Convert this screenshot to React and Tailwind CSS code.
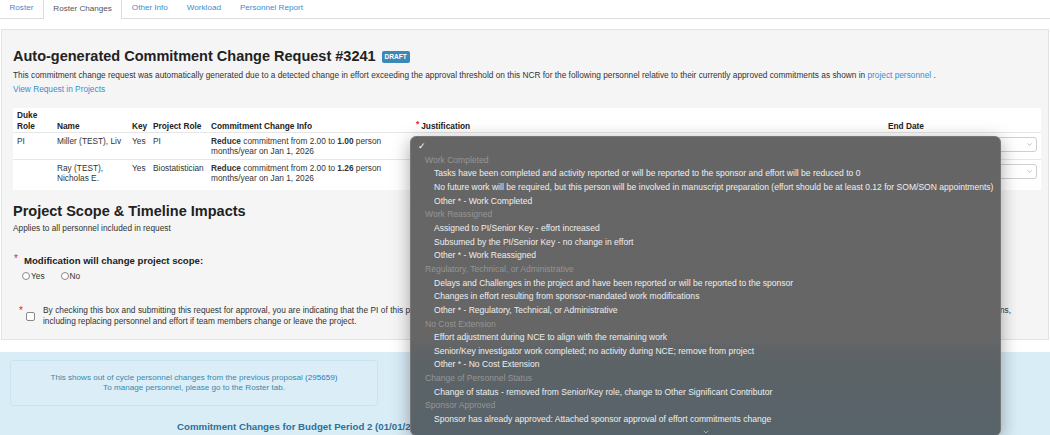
import React from 'react'
import { ChevronDown } from 'lucide-react'

const tabs = ['Roster', 'Roster Changes', 'Other Info', 'Workload', 'Personnel Report']

const personnel = [
    { id: 1, dukeRole: 'PI', name: 'Miller (TEST), Liv', key: 'Yes', role: 'PI', to: '1.00', h: 'h-[27px]' },
    { id: 2, dukeRole: '', name: 'Ray (TEST), Nicholas E.', key: 'Yes', role: 'Biostatistician', to: '1.26', h: 'h-[30px]' },
]

const justificationGroups = [
    {
        label: 'Work Completed',
        options: [
            'Tasks have been completed and activity reported or will be reported to the sponsor and effort will be reduced to 0',
            'No future work will be required, but this person will be involved in manuscript preparation (effort should be at least 0.12 for SOM/SON appointments)',
            'Other * - Work Completed',
        ],
    },
    {
        label: 'Work Reassigned',
        options: [
            'Assigned to PI/Senior Key - effort increased',
            'Subsumed by the PI/Senior Key - no change in effort',
            'Other * - Work Reassigned',
        ],
    },
    {
        label: 'Regulatory, Technical, or Administrative',
        options: [
            'Delays and Challenges in the project and have been reported or will be reported to the sponsor',
            'Changes in effort resulting from sponsor-mandated work modifications',
            'Other * - Regulatory, Technical, or Administrative',
        ],
    },
    {
        label: 'No Cost Extension',
        options: [
            'Effort adjustment during NCE to align with the remaining work',
            'Senior/Key investigator work completed; no activity during NCE; remove from project',
            'Other * - No Cost Extension',
        ],
    },
    {
        label: 'Change of Personnel Status',
        options: ['Change of status - removed from Senior/Key role, change to Other Significant Contributor'],
    },
    {
        label: 'Sponsor Approved',
        options: ['Sponsor has already approved: Attached sponsor approval of effort commitments change'],
    },
]

const SelectBox = () => (
    <div className="flex h-[15px] items-center justify-end rounded-[3px] border border-[#cfcfcf] bg-white pr-[3px]">
        <ChevronDown size={7} strokeWidth={1.6} className="text-[#777]" />
    </div>
)

const JustificationMenu = () => (
    <div className="absolute left-[410px] top-[136px] h-[300px] w-[591px] overflow-hidden rounded-[6px] border border-[#777] bg-[linear-gradient(to_bottom,#666565_0%,#666666_67%,#5d6367_74%,#57636a_100%)] pt-[3.2px] text-[8.55px] text-[#eeeeee] shadow-[0_4px_18px_rgba(0,0,0,0.35)]">
        <div className="h-[13.65px] pl-[7px] leading-[13.65px] text-white">✓</div>
        {justificationGroups.map((group) => (
            <div key={group.label}>
                <div className="h-[13.65px] pl-[14px] leading-[13.65px] text-[#959595]">{group.label}</div>
                {group.options.map((opt) => (
                    <div key={opt} className="h-[13.65px] whitespace-nowrap pl-[23px] leading-[13.65px]">
                        {opt}
                    </div>
                ))}
            </div>
        ))}
        <div className="flex justify-center pt-[1px]">
            <ChevronDown size={8} strokeWidth={1.8} className="text-[#ddd]" />
        </div>
    </div>
)

export default function App() {
    return (
        <div className="relative h-[435px] w-[1050px] overflow-hidden bg-white font-['Liberation_Sans',Arial,sans-serif] text-[8.3px] text-[#333]">
            {/* tabs */}
            <div className="flex h-[19px] items-end border-b border-[#ddd]">
                {tabs.map((tab) =>
                    tab === 'Roster Changes' ? (
                        <div key={tab} className="-mb-px flex h-[20px] items-center border-x border-[#ddd] bg-white px-[9.5px] text-[8.1px] text-[#555]">
                            {tab}
                        </div>
                    ) : (
                        <div key={tab} className="flex h-[19px] items-center px-[9.5px] text-[8.1px] text-[#3a8dd0]">
                            {tab}
                        </div>
                    )
                )}
            </div>

            {/* commitment change request panel */}
            <div className="mx-[1px] mt-[10px] h-[311px] border border-[#e3e3e3] bg-[#f5f5f5] pl-[11px] pt-[17px]">
                <div className="flex items-center gap-[6px]">
                    <h1 className="text-[14.5px] font-bold leading-[18px] text-[#222]">Auto-generated Commitment Change Request #3241</h1>
                    <span className="mt-[1px] rounded-[2px] bg-[#3d88b9] px-[3px] text-[6.5px] font-bold leading-[12px] text-white">DRAFT</span>
                </div>
                <p className="mt-[5px] leading-[11px]">
                    This commitment change request was automatically generated due to a detected change in effort exceeding the approval threshold on this NCR for the following personnel relative to their currently approved commitments as shown in{' '}
                    <span className="text-[#3a8dd0]">project personnel</span> .
                </p>
                <p className="mt-[3px] leading-[11px] text-[#3a8dd0]">View Request in Projects</p>

                <table className="mt-[12.5px] w-[1028px] table-fixed border-collapse bg-white">
                    <colgroup>
                        <col className="w-[40px]" />
                        <col className="w-[75px]" />
                        <col className="w-[21px]" />
                        <col className="w-[58px]" />
                        <col className="w-[205px]" />
                        <col className="w-[472px]" />
                        <col className="w-[157px]" />
                    </colgroup>
                    <thead>
                        <tr className="h-[25px] border-b border-[#e6e6e6] text-left font-bold leading-[11px] text-[#222]">
                            <th className="px-[4px] pb-[0.5px] align-bottom">Duke<br />Role</th>
                            <th className="px-[4px] pb-[0.5px] align-bottom">Name</th>
                            <th className="whitespace-nowrap px-[4px] pb-[0.5px] align-bottom">Key</th>
                            <th className="whitespace-nowrap px-[4px] pb-[0.5px] align-bottom">Project Role</th>
                            <th className="whitespace-nowrap px-[4px] pb-[0.5px] align-bottom">Commitment Change Info</th>
                            <th className="px-[4px] pb-[0.5px] align-bottom">
                                <span className="relative -top-[2px] mr-[2px] text-[#e0261f]">*</span>Justification
                            </th>
                            <th className="px-[4px] pb-[0.5px] align-bottom">End Date</th>
                        </tr>
                    </thead>
                    <tbody>
                        {personnel.map((p, i) => (
                            <tr key={p.id} className={`${p.h} ${i === 0 ? 'border-b border-[#e6e6e6]' : ''} leading-[10px]`}>
                                <td className="px-[4px] pt-[3px] align-top">{p.dukeRole}</td>
                                <td className="px-[4px] pt-[3px] align-top">{p.name}</td>
                                <td className="px-[4px] pt-[3px] align-top">{p.key}</td>
                                <td className="whitespace-nowrap px-[4px] pt-[3px] align-top">{p.role}</td>
                                <td className="px-[4px] pt-[3px] align-top">
                                    <b>Reduce</b> commitment from 2.00 to <b>{p.to}</b> person<br />months/year on Jan 1, 2026
                                </td>
                                <td className="px-[4px] pt-[4px] align-top">
                                    <SelectBox />
                                </td>
                                <td className="pl-[4px] pr-[4px] pt-[4px] align-top">
                                    <SelectBox />
                                </td>
                            </tr>
                        ))}
                    </tbody>
                </table>

                {/* project scope */}
                <h2 className="mt-[12px] text-[14.5px] font-bold leading-[18px] text-[#222]">Project Scope &amp; Timeline Impacts</h2>
                <p className="mt-[3.5px] leading-[11px]">Applies to all personnel included in request</p>
                <div className="mt-[20.5px] flex items-start leading-[12px]">
                    <span className="relative -top-[2px] w-[11px] pl-[1px] text-[10px] text-[#e0261f]">*</span>
                    <span className="text-[9.6px] font-bold text-[#222]">Modification will change project scope:</span>
                </div>
                <div className="mt-[4px] flex items-center pl-[9px] leading-[11px]">
                    <span className="h-[8px] w-[8px] rounded-full border border-[#888] bg-white" />
                    <span className="ml-[1px]">Yes</span>
                    <span className="ml-[16px] h-[8px] w-[8px] rounded-full border border-[#888] bg-white" />
                    <span className="ml-[1px]">No</span>
                </div>
                <div className="mt-[23.5px] flex items-center">
                    <span className="relative -top-[6px] w-[13px] pl-[6px] text-[10px] leading-[11px] text-[#e0261f]">*</span>
                    <span className="h-[9px] w-[9px] rounded-[2px] border border-[#888] bg-white" />
                    <div className="ml-[8px] w-[968px] leading-[11px]">
                        <span className="block text-justify [text-align-last:justify]">
                            By checking this box and submitting this request for approval, you are indicating that the PI of this project has been made aware of these changes and agrees to maintain the proposed scope of work and the effort commitments to the sponsor and all expectations,
                        </span>
                        <span className="block">including replacing personnel and effort if team members change or leave the project.</span>
                    </div>
                </div>
            </div>

            {/* out of cycle changes */}
            <div className="mt-[12px] h-[120px] bg-[#d9edf7] pl-[10px] pt-[8px]">
                <div className="flex h-[46px] w-[368px] flex-col items-center justify-center rounded-[3px] border border-[#c8e4f2] bg-[#dbeef8] text-[8.1px] leading-[10px] text-[#3a87ad]">
                    <span>
                        This shows out of cycle personnel changes from the previous proposal <span className="text-[#2a7dc0]">(295659)</span>
                    </span>
                    <span>To manage personnel, please go to the Roster tab.</span>
                </div>
                <h3 className="mt-[15px] pl-[167px] text-[9.7px] font-bold leading-[12px] text-[#2f6f98]">
                    Commitment Changes for Budget Period 2 (01/01/2026 - 12/31/2026)
                </h3>
            </div>

            <JustificationMenu />
        </div>
    )
}
